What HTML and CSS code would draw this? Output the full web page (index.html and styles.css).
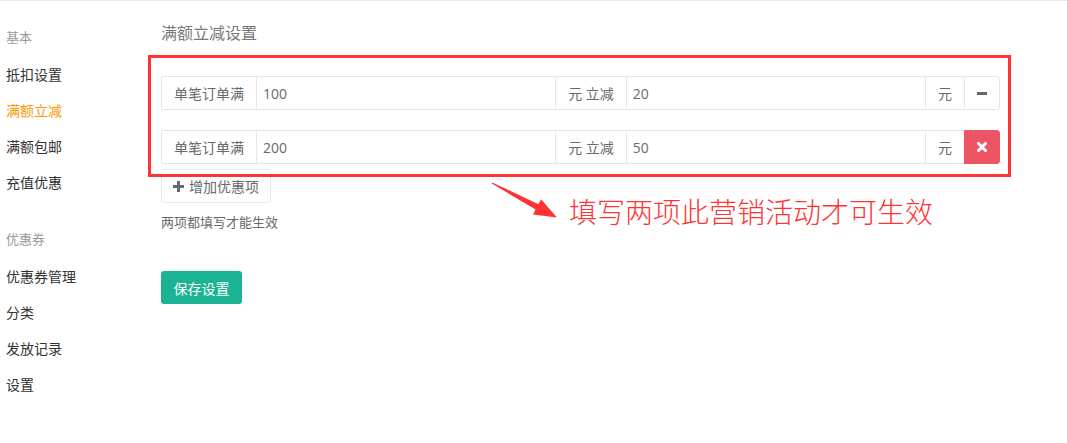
FILE: index.html
```html
<!DOCTYPE html>
<html lang="zh-CN">
<head>
<meta charset="utf-8">
<title>满额立减设置</title>
<link rel="stylesheet" href="styles.css">
</head>
<body>
<div class="page">
  <aside class="sidebar">
    <div class="nav-header">基本</div>
    <a class="nav-item">抵扣设置</a>
    <a class="nav-item active">满额立减</a>
    <a class="nav-item">满额包邮</a>
    <a class="nav-item">充值优惠</a>
    <div class="nav-header gap">优惠券</div>
    <a class="nav-item">优惠券管理</a>
    <a class="nav-item">分类</a>
    <a class="nav-item">发放记录</a>
    <a class="nav-item">设置</a>
  </aside>
  <main class="main">
    <h3 class="title">满额立减设置</h3>
    <div class="rows">
      <div class="input-group">
        <span class="addon first">单笔订单满</span>
        <input class="field" value="100">
        <span class="addon">元 立减</span>
        <input class="field" value="20">
        <span class="addon">元</span>
        <button class="btn-icon btn-default"><svg width="10" height="3" viewBox="0 0 10 3"><rect width="10" height="3" fill="#676a6c"/></svg></button>
      </div>
      <div class="input-group">
        <span class="addon first">单笔订单满</span>
        <input class="field" value="200">
        <span class="addon">元 立减</span>
        <input class="field" value="50">
        <span class="addon">元</span>
        <button class="btn-icon btn-danger"><svg width="10" height="10" viewBox="0 0 10 10"><path d="M1.5 1.5 L8.5 8.5 M8.5 1.5 L1.5 8.5" stroke="#fff" stroke-width="3" stroke-linecap="square"/></svg></button>
      </div>
    </div>
    <button class="btn-add"><svg class="plus" width="11" height="11" viewBox="0 0 11 11"><path d="M4 0h3v4h4v3h-4v4h-3v-4h-4v-3h4z" fill="#676a6c"/></svg>增加优惠项</button>
    <p class="help">两项都填写才能生效</p>
    <button class="btn-save">保存设置</button>
  </main>
  <div class="callout-box"></div>
  <svg class="callout-arrow" width="1067" height="443" viewBox="0 0 1067 443">
    <polygon points="492.2,182.4 538.5,204.3 541,199.2 557,217.5 533,214.5 535.6,209.5 491.8,183.6" fill="#f33"/>
  </svg>
  <div class="callout-text">填写两项此营销活动才可生效</div>
</div>
</body>
</html>
```

FILE: styles.css
```css
* { box-sizing: border-box; }
html, body { margin: 0; padding: 0; background: #fff; }
body {
  font-family: "Open Sans", "Noto Sans CJK SC", sans-serif;
  font-size: 14px;
  color: #676a6c;
}
.page {
  position: relative;
  display: flex;
  width: 1067px;
  height: 443px;
  border-top: 1px solid #ebebeb;
  overflow: hidden;
}
.sidebar {
  width: 161px;
  flex: none;
  padding: 18px 0 0 6px;
  display: flex;
  flex-direction: column;
}
.nav-header {
  height: 38px;
  line-height: 36px;
  font-size: 13px;
  color: #999;
}
.nav-header.gap { margin-top: 20px; }
.nav-item {
  height: 36px;
  line-height: 36px;
  font-size: 14px;
  color: #333;
  text-decoration: none;
}
.nav-item.active { color: #f90; }
.main {
  flex: 1;
  padding: 22px 67px 0 0;
  display: flex;
  flex-direction: column;
  align-items: flex-start;
}
.title {
  margin: 0;
  font-size: 16px;
  line-height: 20px;
  font-weight: normal;
  color: #777;
}
.rows {
  margin-top: 33px;
  width: 100%;
  display: flex;
  flex-direction: column;
  gap: 20px;
}
.input-group {
  display: flex;
  height: 34px;
  width: 100%;
}
.addon {
  flex: none;
  display: flex;
  align-items: center;
  padding: 0 12px;
  border: 1px solid #e5e6e7;
  border-right: 0;
  background: #fff;
  font-size: 14px;
  color: #676a6c;
  white-space: nowrap;
}
.addon.first { border-radius: 2px 0 0 2px; }
.field {
  flex: 1;
  min-width: 0;
  height: 34px;
  border: 1px solid #e5e6e7;
  border-right: 0;
  padding: 0 6px;
  font: inherit;
  font-size: 14px;
  color: #676a6c;
  outline: none;
  background: #fff;
}
.btn-icon {
  flex: none;
  width: 36px;
  height: 34px;
  display: flex;
  align-items: center;
  justify-content: center;
  padding: 0;
  border-radius: 0 3px 3px 0;
}
.btn-default { background: #fff; border: 1px solid #e5e6e7; }
.btn-danger { background: #ed5565; border: 1px solid #ed5565; }
.btn-add {
  margin-top: 5px;
  height: 34px;
  width: 110px;
  display: flex;
  align-items: center;
  justify-content: center;
  gap: 5px;
  background: #fff;
  border: 1px solid #e7eaec;
  border-radius: 3px;
  font: inherit;
  font-size: 14px;
  color: #676a6c;
  padding: 0;
}
.help {
  margin: 10px 0 0;
  font-size: 13px;
  line-height: 18px;
  color: #676a6c;
}
.btn-save {
  margin-top: 40px;
  width: 81px;
  height: 33px;
  background: #1ab394;
  border: 0;
  border-radius: 3px;
  color: #fff;
  font: inherit;
  font-size: 14px;
  padding: 0;
}
.callout-box {
  position: absolute;
  left: 148px;
  top: 54px;
  width: 863px;
  height: 122px;
  border: 3px solid #f33;
  pointer-events: none;
}
.callout-arrow {
  position: absolute;
  left: 0;
  top: -1px;
  pointer-events: none;
}
.callout-text {
  position: absolute;
  left: 569px;
  top: 194px;
  font-family: "Noto Sans CJK SC", sans-serif;
  font-size: 28px;
  font-weight: 300;
  line-height: 32px;
  color: #f33;
  white-space: nowrap;
}
```
